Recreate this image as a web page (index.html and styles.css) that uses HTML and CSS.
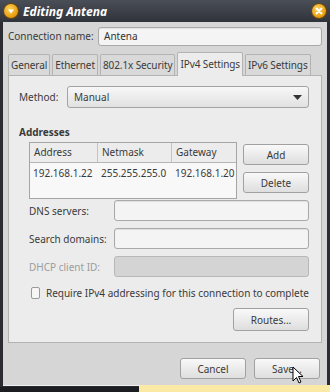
FILE: index.html
```html
<!DOCTYPE html>
<html lang="en">
<head>
  <meta charset="UTF-8" />
  <title>Editing Antena</title>
  <link rel="stylesheet" href="styles.css">
</head>
<body>

<div class="window">
  <div class="titlebar">
    <span class="wbtn menu-btn">
      <svg width="14" height="14" viewBox="0 0 14 14"><path d="M4 5.5 L10 5.5 L7 9.5 Z" fill="#fff"/></svg>
    </span>
    <span class="title">Editing Antena</span>
    <span class="wbtn close-btn">
      <svg width="14" height="14" viewBox="0 0 14 14"><path d="M4.5 4.5 L9.5 9.5 M9.5 4.5 L4.5 9.5" stroke="#fff" stroke-width="2" stroke-linecap="round"/></svg>
    </span>
  </div>

  <div class="client">
    <div class="name-row">
      <label>Connection name:</label>
      <div class="entry">Antena</div>
    </div>

    <div class="tabs">
      <div class="tab">General</div>
      <div class="tab">Ethernet</div>
      <div class="tab">802.1x Security</div>
      <div class="tab active">IPv4 Settings</div>
      <div class="tab">IPv6 Settings</div>
    </div>

    <div class="panel">
      <div class="method-row">
        <label>Method:</label>
        <div class="combo">
          <span>Manual</span>
          <svg width="9" height="5" viewBox="0 0 9 5"><path d="M0 0 L9 0 L4.5 5 Z" fill="#333"/></svg>
        </div>
      </div>

      <div class="section-title">Addresses</div>

      <div class="addr-row">
        <div class="table">
          <div class="thead">
            <div class="col c1">Address</div>
            <div class="col c2">Netmask</div>
            <div class="col c3">Gateway</div>
          </div>
          <div class="trow">
            <div class="col c1">192.168.1.22</div>
            <div class="col c2">255.255.255.0</div>
            <div class="col c3">192.168.1.20</div>
          </div>
        </div>
        <div class="addr-btns">
          <button class="btn">Add</button>
          <button class="btn">Delete</button>
        </div>
      </div>

      <div class="form">
        <label>DNS servers:</label>
        <div class="entry"></div>
        <label>Search domains:</label>
        <div class="entry"></div>
        <label class="disabled">DHCP client ID:</label>
        <div class="entry disabled"></div>
      </div>

      <div class="check-row">
        <span class="checkbox"></span>
        <span>Require IPv4 addressing for this connection to complete</span>
      </div>

      <div class="routes-row">
        <button class="btn routes">Routes...</button>
      </div>
    </div>

    <div class="dialog-btns">
      <button class="btn">Cancel</button>
      <button class="btn">Save...</button>
    </div>
  </div>
</div>

<div class="tooltip"></div>

<svg class="cursor" width="12" height="19" viewBox="0 0 12 19">
  <path d="M1 1 L1 15 L4.5 11.5 L7 17 L9 16 L6.5 10.5 L11 10.5 Z" fill="#fff" stroke="#000" stroke-width="1" stroke-linejoin="round"/>
</svg>

</body>
</html>
```

FILE: styles.css
```css
body {
  margin: 0;
  width: 330px;
  height: 392px;
  background: #1c1d20;
  font-family: 'Noto Sans', 'Open Sans', sans-serif;
  font-size: 10px;
  color: #3a3a3a;
  white-space: nowrap;
  overflow: hidden;
  position: relative;
}
.window {
  width: 330px;
  height: 387px;
  background: #2a2c31;
  display: flex;
  flex-direction: column;
}
.titlebar {
  height: 22px;
  display: flex;
  align-items: center;
  padding: 0 4px;
  background: linear-gradient(to bottom, #4a4e57, #30333a);
}
.wbtn {
  width: 14px;
  height: 14px;
  border-radius: 50%;
  background: radial-gradient(circle at 40% 35%, #ffd25a, #e79a0c 70%, #b56f00);
  box-shadow: 0 0 0 1px #6b4a10;
  display: flex;
}
.title {
  flex: 1;
  margin-left: 5px;
  color: #fff;
  font-weight: bold;
  font-style: italic;
  font-size: 12px;
}
.client {
  flex: 1;
  margin: 0 3px 1px 3px;
  background: #d6d6d6;
  padding: 4px 5px 0 5px;
  display: flex;
  flex-direction: column;
  border-bottom: 1px solid #eee;
}
.name-row {
  display: flex;
  align-items: center;
  height: 20px;
}
.name-row label {
  width: 90px;
}
.name-row .entry {
  flex: 1;
}
.entry {
  height: 19px;
  box-sizing: border-box;
  background: #f4f4f4;
  border: 1px solid #a9a9a9;
  border-radius: 3px;
  padding: 0 5px;
  line-height: 17px;
  color: #333;
  box-shadow: inset 0 1px 1px rgba(0,0,0,0.08);
}
.entry.disabled {
  background: #d4d4d4;
  border-color: #b8b8b8;
  box-shadow: none;
}
label.disabled {
  color: #9c9c9c;
}
.tabs {
  display: flex;
  align-items: flex-end;
  margin-top: 6px;
  height: 23px;
  gap: 2px;
}
.tab {
  height: 20px;
  line-height: 20px;
  padding: 0 2px;
  letter-spacing: -0.1px;
  background: #d9d9d9;
  border: 1px solid #b3b3b3;
  border-bottom: none;
  border-radius: 2px 2px 0 0;
}
.tab.active {
  height: 23px;
  line-height: 22px;
  background: #ececec;
  position: relative;
  top: 1px;
  z-index: 1;
}
.panel {
  height: 268px;
  background: #ececec;
  border: 1px solid #b3b3b3;
  padding: 10px 12px 0 10px;
  box-sizing: border-box;
}
.method-row {
  display: flex;
  align-items: center;
}
.method-row label {
  width: 48px;
}
.combo {
  flex: 1;
  height: 22px;
  box-sizing: border-box;
  border: 1px solid #a3a3a3;
  border-radius: 3px;
  background: linear-gradient(to bottom, #f7f7f7, #e1e1e1);
  display: flex;
  align-items: center;
  justify-content: space-between;
  padding: 0 6px 0 6px;
}
.section-title {
  font-weight: bold;
  margin-top: 14px;
  height: 20px;
  line-height: 20px;
}
.addr-row {
  display: flex;
  padding-left: 10px;
  gap: 6px;
}
.table {
  width: 210px;
  height: 57px;
  box-sizing: border-box;
  border: 1px solid #a5a5a5;
  background: #f8f8f8;
}
.thead {
  display: flex;
  height: 19px;
  line-height: 18px;
  border-bottom: 1px solid #b5b5b5;
  background: #ececec;
}
.trow {
  display: flex;
  line-height: 18px;
  padding-top: 1px;
}
.col {
  padding-left: 3px;
  box-sizing: border-box;
}
.thead .col {
  padding-left: 4px;
  border-right: 1px solid #c4c4c4;
}
.thead .c3 { border-right: none; }
.c1 { width: 68px; }
.c2 { width: 74px; }
.c3 { flex: 1; }
.addr-btns {
  display: flex;
  flex-direction: column;
  gap: 7px;
  padding-top: 2px;
}
.btn {
  font-family: inherit;
  font-size: 10px;
  color: #3a3a3a;
  width: 66px;
  height: 21px;
  padding: 0;
  border: 1px solid #a1a1a1;
  border-radius: 3px;
  background: linear-gradient(to bottom, #f9f9f9, #dedede);
}
.form {
  display: grid;
  grid-template-columns: 85px 1fr;
  row-gap: 7px;
  align-items: center;
  padding-left: 10px;
  margin-top: 1px;
}
.form .entry {
  height: 21px;
}
.check-row {
  display: flex;
  align-items: center;
  gap: 6px;
  margin-top: 9px;
  padding-left: 12px;
}
.checkbox {
  width: 10px;
  height: 10px;
  border: 1px solid #9a9a9a;
  border-radius: 2px;
  background: #f6f6f6;
}
.routes-row {
  display: flex;
  justify-content: flex-end;
  margin-top: 8px;
}
.btn.routes {
  width: 76px;
  height: 23px;
}
.dialog-btns {
  display: flex;
  justify-content: flex-end;
  gap: 8px;
  margin-top: 15px;
  padding-right: 2px;
}
.tooltip {
  position: absolute;
  left: 139px;
  top: 385px;
  width: 200px;
  height: 10px;
  background: #fbe9a6;
}
.cursor {
  position: absolute;
  left: 292px;
  top: 366px;
}
```
